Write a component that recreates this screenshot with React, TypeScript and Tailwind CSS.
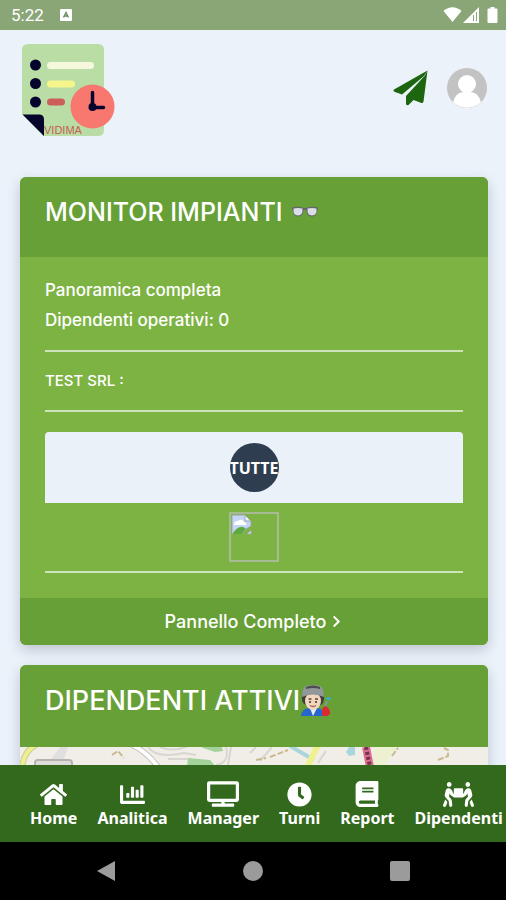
import type { ReactNode } from 'react';
import {
    FaHome,
    FaChartBar,
    FaTv,
    FaClock,
    FaBook,
    FaPeopleCarry,
    FaChevronRight,
} from 'react-icons/fa';

const navItems = [
    { label: 'Home', icon: <FaHome size={27} /> },
    { label: 'Analitica', icon: <FaChartBar size={25} /> },
    { label: 'Manager', icon: <FaTv size={32} /> },
    { label: 'Turni', icon: <FaClock size={25} /> },
    { label: 'Report', icon: <FaBook size={26} /> },
    { label: 'Dipendenti', icon: <FaPeopleCarry size={31} /> },
];

function StatusBar() {
    return (
        <div className="flex h-[30px] shrink-0 items-center justify-between bg-[#8aa576] pr-2 pl-[11px] text-white">
            <div className="flex items-center gap-4">
                <span className="font-['Roboto',sans-serif] text-[17px] leading-5">5:22</span>
                <svg className="size-3" viewBox="0 0 12 12" aria-hidden="true">
                    <rect width="12" height="12" rx="1" fill="#fff" />
                    <path d="M3.5 8.5 6 3.5l2.5 5M4.5 7h3" fill="none" stroke="#6d8a5a" strokeWidth="1.4" />
                </svg>
            </div>
            <svg className="h-4 w-14" viewBox="0 0 56 16" fill="#fff" aria-hidden="true">
                <path d="M1.500 4Q10.500-3.500 19.500 4L10.500 15Z" />
                <path d="M37 0v16H21L37 0Z" />
                <path d="M31.500 8v6M34.500 5v9" stroke="#8aa576" strokeWidth="1" />
                <path d="M46.500 1.500h2V0h4v1.500h2q1 0 1 1V15q0 1-1 1h-8q-1 0-1-1V2.500q0-1 1-1Z" />
            </svg>
        </div>
    );
}

function Logo() {
    return (
        <svg className="h-[94px] w-[94px]" viewBox="0 0 94 94" role="img" aria-label="Vidima">
            <path d="M7 0h70q6 0 6 6v80q0 6-6 6H22L1 70V6q0-6 6-6Z" fill="#badda6" />
            <g fill="#04042d">
                <circle cx="14.500" cy="21" r="5.500" />
                <circle cx="14.500" cy="39.500" r="5.500" />
                <circle cx="14.500" cy="58" r="5.500" />
                <path d="M1.500 70.500H18q5 0 5 5V92Z" />
            </g>
            <rect x="26" y="18" width="47" height="7" rx="3.500" fill="#f5f8dc" />
            <rect x="26" y="36.500" width="28" height="7" rx="3.500" fill="#f5f58b" />
            <rect x="26" y="54.500" width="18" height="7" rx="3.500" fill="#cc5f59" />
            <circle cx="71.500" cy="62.500" r="22" fill="#f8776f" />
            <path d="M71.500 48.500v15h11" fill="none" stroke="#04042d" strokeWidth="3.500" strokeLinecap="round" />
            <circle cx="71.500" cy="63" r="4" fill="#04042d" />
            <text x="23" y="90" fill="#c4604f" className="font-['Liberation_Sans',sans-serif] text-[11px]">
                VIDIMA
            </text>
        </svg>
    );
}

function Header() {
    return (
        <header className="flex items-start justify-between pt-[14px] pr-[19px] pl-[21px]">
            <a href="#home">
                <Logo />
            </a>
            <div className="flex items-center gap-[18px] pt-6">
                <button type="button" aria-label="Invia">
                    <svg className="size-9" viewBox="0 0 36 36" fill="#1d660f" aria-hidden="true">
                        <path d="M34.500.5 1 19.500q-1.500 1.500 1 2.500l7 2.500L31 6Z" />
                        <path d="m34.500.5-4 31q-.5 2-2 1.500L20.500 30l-5 5q-2 1-2.500-1v-8L31.500 6Z" />
                    </svg>
                </button>
                <button type="button" aria-label="Profilo">
                    <svg className="size-10" viewBox="0 0 40 40" aria-hidden="true">
                        <circle cx="20" cy="20" r="20" fill="#c3c3c3" />
                        <circle cx="20" cy="16" r="9" fill="#fff" />
                        <path d="M6 34.500Q8 25 16 24h8q8 1 10 10.500-14 10.500-28 0Z" fill="#fff" />
                    </svg>
                </button>
            </div>
        </header>
    );
}

function GlassesIcon() {
    return (
        <svg className="h-3 w-7" viewBox="0 0 28 12" role="img" aria-label="occhiali">
            <path
                d="M1 1.500Q7 0 13 2h2q6-2 12-.5v2l-1 1q-.5 6-5 6-5 0-5.500-6-1.500-1.500-3 0-.5 6-5.500 6-4.500 0-5-6l-1-1Z"
                fill="#62676a"
            />
            <path d="M2.500 2.500q4.500-1 9 0 .5 7-4.500 7t-4.500-7ZM16.500 2.500q4.500-1 9 0 .5 7-4.500 7t-4.500-7Z" fill="#dcdde8" />
        </svg>
    );
}

function MechanicIcon() {
    return (
        <svg className="size-8" viewBox="0 0 32 32" role="img" aria-label="meccanico">
            <path d="M1 31q1-8 9-8h6q8 0 9 8Z" fill="#2765cf" />
            <path d="m10 23 3 8 4-8Z" fill="#e8eef5" />
            <path d="M2 14Q1 8 5 7h16q4 1 3 7-1 6-4 6H6q-4-2-4-6Z" fill="#403c3a" />
            <ellipse cx="13" cy="16" rx="8" ry="9" fill="#f2d6bd" />
            <path d="M2 12Q2 3 6 1q7-2 14 0 4 2 4 11Q13 7 2 12Z" fill="#929799" />
            <path d="M6 2q7-3 14 0v2Q13 2 6 4Z" fill="#4b4d4e" />
            <path d="M8.500 14h3M15 14h3" stroke="#594438" strokeWidth="1.500" />
            <circle cx="10" cy="17" r="1" fill="#3b302a" />
            <circle cx="16" cy="17" r="1" fill="#3b302a" />
            <path d="M10 20.500q3 2 6 0" fill="none" stroke="#a66351" strokeWidth="1.500" />
            <path d="m25 22 2-6" stroke="#7f9ba9" strokeWidth="1.500" />
            <path d="M26 13.500q2-3 5 0l-2 2Z" fill="#36a9e1" />
            <path d="M22 26q0-4 4-5 5 4 4 8-4 4-8 1Z" fill="#dc2b2f" />
        </svg>
    );
}

function BrokenImage() {
    return (
        <svg className="size-[50px]" viewBox="0 0 50 50" role="img" aria-label="Immagine non disponibile">
            <rect x="1" y="1" width="48" height="48" fill="none" stroke="#b5bfae" strokeWidth="1.500" />
            <path d="M3 3h13l6 6v5l-5 3-4 5H3Z" fill="#c5d6f4" />
            <path d="M5 13q0-4 4-4 4-3 6 1 3 1 2 3Z" fill="#fff" />
            <path d="M4 21q7-10 13-4l-4 5H4Z" fill="#5cab41" />
            <path d="M3 22V3h12M13 22l4-5 5-3V9" fill="none" stroke="#9ba5a8" />
            <path d="M16 3v6h6Z" fill="#eef2f8" stroke="#9ba5a8" />
            <path d="m18 22 4-4v4Z" fill="#dce4f4" stroke="#9ba5a8" />
        </svg>
    );
}

function StreetMap() {
    return (
        <svg
            className="block h-24 w-full bg-[#f1eee8]"
            viewBox="0 0 468 96"
            preserveAspectRatio="xMidYMin slice"
            role="img"
            aria-label="Mappa"
        >
            <path d="M354 0h24l-14 18-4 78h-12Z" fill="#edf1d2" />
            <path d="m168 11 22 2 6 7h-29ZM182 0h20l1 4-8 1-12-4Z" fill="#a3d39b" />
            <path d="M30 14 40 0h8l-6 18H30Z" fill="#e0dfe0" />
            <g fill="none" stroke="#d8d5d2" strokeWidth="2">
                <path d="M128 0q8 12 36 6l12 2M140 0q14 6 30-2M148 12h20M196 18q14-2 10-18M208 18l3-18M230 6l6-6M240 14l12-14M298 16l8-12" />
            </g>
            <path d="M112-2q14 6 26 22" fill="none" stroke="#c4c2bf" strokeWidth="6" />
            <path d="M112-2q14 6 26 22" fill="none" stroke="#fff" strokeWidth="4" />
            <path d="M2 20Q4 4 16-2" fill="none" stroke="#c9cb95" strokeWidth="6" />
            <path d="M2 20Q4 4 16-2" fill="none" stroke="#eef08f" strokeWidth="4" />
            <path d="m270-1 24 14" fill="none" stroke="#a9d6dc" strokeWidth="4" />
            <path d="m288 18 10-20" fill="none" stroke="#eff08e" strokeWidth="6" />
            <path d="M329 0h6v8l-6 1-3-4Z" fill="#a9d6dc" />
            <path
                d="m92 8 6-4 6 7M236 13l10-2M250 10l18-7M372 9l6-8M418 13l10-4v-6l-4-2"
                fill="none"
                stroke="#c8bb92"
                strokeWidth="2"
                strokeDasharray="6 2"
            />
            <path d="m346 0 4 20" stroke="#dc6f90" strokeWidth="8" />
            <path d="m346 0 4 20" stroke="#77314a" strokeWidth="4" strokeDasharray="3 2" />
            <rect x="15" y="13" width="37" height="60" rx="3" fill="#dddcd8" stroke="#b4b3b1" strokeWidth="2" />
        </svg>
    );
}

function MonitorCard() {
    return (
        <Card>
            <div className="flex h-20 items-start bg-[#67a037] px-[25px] pt-[17px]">
                <h2 className="flex items-center gap-2 text-[25px] leading-9 font-medium whitespace-nowrap">
                    MONITOR IMPIANTI
                    <GlassesIcon />
                </h2>
            </div>
            <div className="px-[25px] pt-[18px] pb-[25px] text-[17px] leading-[30px] font-medium">
                <p>Panoramica completa</p>
                <p>Dipendenti operativi: 0</p>
                <hr className="mt-[15px] mb-[14px] border-t-2 border-[#cfe3bb]" />
                <p className="text-[15px] leading-[30px]">TEST SRL :</p>
                <hr className="mt-[14px] mb-5 border-t-2 border-[#cfe3bb]" />
                <div className="flex justify-center rounded-t bg-[#ebf1f9] py-[11px]">
                    <button
                        type="button"
                        className="flex size-[49px] items-center justify-center overflow-hidden rounded-full bg-[#2e3d50] font-['Noto_Sans',sans-serif] text-base font-bold text-white"
                    >
                        TUTTE
                    </button>
                </div>
                <div className="flex justify-center py-[9px]">
                    <BrokenImage />
                </div>
                <hr className="border-t-2 border-[#cfe3bb]" />
            </div>
            <a
                href="#pannello"
                className="flex h-[47px] items-center justify-center gap-1 bg-[#67a037] text-lg font-medium"
            >
                Pannello Completo
                <FaChevronRight size={13} />
            </a>
        </Card>
    );
}

function EmployeesCard() {
    return (
        <Card>
            <div className="flex h-[82px] items-start bg-[#67a037] px-[25px] pt-[18px]">
                <h2 className="flex items-center text-[27px] leading-9 font-medium whitespace-nowrap">
                    DIPENDENTI ATTIVI
                    <MechanicIcon />
                </h2>
            </div>
            <StreetMap />
        </Card>
    );
}

function Card({ children }: { children: ReactNode }) {
    return (
        <section className="overflow-hidden rounded-md bg-[#7db343] shadow-[0_5px_14px_#00002030]">{children}</section>
    );
}

function BottomNav() {
    return (
        <nav className="flex h-[77px] shrink-0 gap-5 overflow-hidden bg-[#33691d] pt-4 pl-[30px] font-['Noto_Sans',sans-serif] text-base font-bold text-white">
            {navItems.map((item) => (
                <a key={item.label} href={`#${item.label.toLowerCase()}`} className="flex shrink-0 flex-col items-center">
                    <span className="flex h-[26px] items-center">{item.icon}</span>
                    <span className="leading-[22px]">{item.label}</span>
                </a>
            ))}
        </nav>
    );
}

function SystemBar() {
    return (
        <div className="grid h-[58px] shrink-0 grid-cols-3 place-items-center bg-black px-8">
            <button type="button" aria-label="Indietro">
                <svg className="h-[22px] w-5" viewBox="0 0 20 22" fill="#9b9b9b" aria-hidden="true">
                    <path d="M19 1v20L1 11Z" />
                </svg>
            </button>
            <button type="button" aria-label="Schermata principale" className="size-5 rounded-full bg-[#9b9b9b]" />
            <button type="button" aria-label="Recenti" className="size-5 rounded-xs bg-[#9b9b9b]" />
        </div>
    );
}

export default function App() {
    return (
        <div className="flex h-dvh flex-col bg-[#ebf2fa] font-['Inter',sans-serif] text-white">
            <StatusBar />
            <div className="min-h-0 flex-1 overflow-hidden">
                <Header />
                <main className="flex flex-col gap-5 pt-[39px] pr-[18px] pb-5 pl-5">
                    <MonitorCard />
                    <EmployeesCard />
                </main>
            </div>
            <BottomNav />
            <SystemBar />
        </div>
    );
}
